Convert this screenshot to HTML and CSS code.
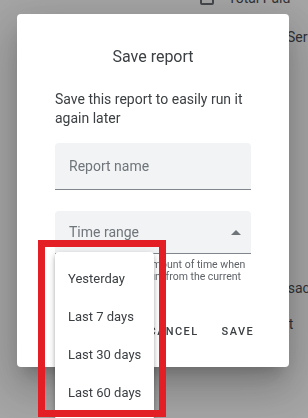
FILE: index.html
```html
<!DOCTYPE html>
<html lang="en">
<head>
  <meta charset="UTF-8" />
  <meta name="viewport" content="width=device-width, initial-scale=1.0"/>
  <title>Save report</title>
  <link rel="stylesheet" href="styles.css">
</head>
<body>
  <div class="page">
    <div class="row row-top"><span class="check"></span><span>Total Paid</span></div>
    <div class="row row-service">Service</div>
    <div class="row row-trans">Transact</div>
    <div class="row row-last">Amount</div>
  </div>

  <div class="scrim"></div>

  <div class="dialog">
    <h2 class="title">Save report</h2>
    <p class="desc">Save this report to easily run it again later</p>
    <div class="field">Report name</div>
    <div class="field select">
      <span>Time range</span>
      <span class="arrow"></span>
    </div>
    <div class="helper">Sets the relative amount of time when<br>then reports are run, from the current</div>
    <div class="actions">
      <button class="btn">Cancel</button>
      <button class="btn">Save</button>
    </div>
  </div>

  <ul class="menu">
    <li>Yesterday</li>
    <li>Last 7 days</li>
    <li>Last 30 days</li>
    <li>Last 60 days</li>
  </ul>

  <div class="highlight"></div>
</body>
</html>
```

FILE: styles.css
```css
body { margin: 0; font-family: Roboto, "Liberation Sans", sans-serif; color: #3c4043; background: #fff; width: 308px; height: 418px; overflow: hidden; }

.page { padding-left: 200px; font-size: 14px; color: #3c4043; }
.row { height: 20px; line-height: 20px; white-space: nowrap; }
.row-top { display: flex; align-items: center; gap: 14px; margin-top: -12px; }
.check { width: 10px; height: 10px; border: 2px solid #5f6368; border-radius: 2px; }
.row-service { padding-left: 87px; margin-top: 19px; }
.row-trans { padding-left: 60px; margin-top: 231px; }
.row-last { padding-left: 44px; margin-top: 16px; }

.scrim { position: fixed; inset: 0; background: rgba(32,33,36,0.4); }

.dialog { position: fixed; left: 17px; top: 14px; width: 272px; height: 353px; box-sizing: border-box; padding: 31px 38px 0; background: #fff; border-radius: 4px; box-shadow: 0 11px 15px -7px rgba(0,0,0,.2), 0 24px 38px 3px rgba(0,0,0,.14), 0 9px 46px 8px rgba(0,0,0,.12); }
.title { margin: 0; font-size: 16px; font-weight: 400; line-height: 24px; text-align: center; }
.desc { margin: 21px 0 15px; font-size: 14px; line-height: 19px; }

.field { display: flex; align-items: center; justify-content: space-between; height: 46px; padding: 0 14px; background: #f1f3f4; border-bottom: 1px solid #80868b; border-radius: 4px 4px 0 0; font-size: 14px; color: #70757a; }
.select { height: 42px; margin-top: 21px; padding-right: 10px; }
.arrow { width: 0; height: 0; border-left: 5px solid transparent; border-right: 5px solid transparent; border-bottom: 5px solid #70757a; }
.helper { margin-top: 5px; padding: 0 14px; font-size: 10.5px; line-height: 11.5px; color: #5f6368; white-space: nowrap; overflow: hidden; }

.actions { display: flex; justify-content: flex-end; gap: 7px; margin: 31px -11px 0 0; }
.btn { height: 36px; padding: 0 8px; border: none; background: none; font-family: inherit; font-size: 11px; font-weight: 500; letter-spacing: 1.4px; text-transform: uppercase; color: #3c4043; }

.menu { position: fixed; left: 55px; top: 252px; width: 99px; margin: 0; padding: 8px 0; list-style: none; background: #fff; border-radius: 4px; box-shadow: 0 2px 4px -1px rgba(0,0,0,.2), 0 4px 5px 0 rgba(0,0,0,.14), 0 1px 10px 0 rgba(0,0,0,.12); font-size: 13px; }
.menu li { height: 38px; line-height: 38px; padding-left: 13px; white-space: nowrap; }

.highlight { position: fixed; left: 38px; top: 240px; width: 128px; height: 177px; box-sizing: border-box; border: 7px solid #e31e24; }
```
